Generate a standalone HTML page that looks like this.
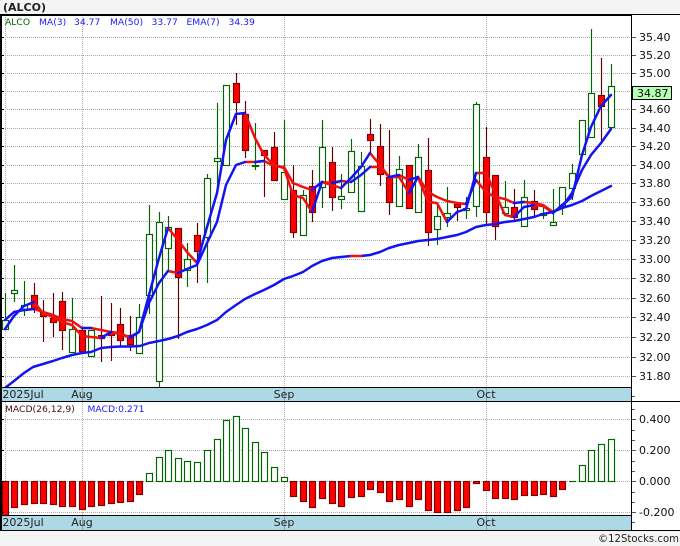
<!DOCTYPE html>
<html><head><meta charset="utf-8"><style>
html,body{margin:0;padding:0;background:#f4f4f4;width:680px;height:546px;overflow:hidden}
svg{display:block}
text{font-family:"DejaVu Sans",sans-serif}
.a{font-size:11px;fill:#111}
.l{font-size:9.2px}
.x{font-size:11px;fill:#222;text-anchor:middle}
</style></head><body>
<svg width="680" height="546" viewBox="0 0 680 546" xmlns="http://www.w3.org/2000/svg">
<rect width="680" height="546" fill="#f4f4f4"/>
<rect x="0" y="14" width="680" height="516" fill="#fff"/>
<rect x="1" y="388" width="630" height="13" fill="#add8e6"/>
<rect x="1" y="516" width="630" height="14" fill="#add8e6"/>
<text x="3" y="11" font-size="11" font-weight="bold" fill="#222">(ALCO)</text>
<!-- grid -->
<path fill="none" stroke="#aaa" stroke-dasharray="1 1" d="M5 37.5H631M5 55.5H631M5 73.5H631M5 91.5H631M5 109.5H631M5 128.5H631M5 146.5H631M5 165.5H631M5 183.5H631M5 202.5H631M5 221.5H631M5 240.5H631M5 259.5H631M5 278.5H631M5 298.5H631M5 317.5H631M5 337.5H631M5 357.5H631M5 376.5H631M5 419.5H631M5 450.5H631M5 481.5H631M5 512.5H631M5.5 15V387M82.5 15V387M284.5 15V387M486.5 15V387M5.5 402V515M82.5 402V515M284.5 402V515M486.5 402V515"/>
<path fill="none" stroke="#999" d="M82.5 388V401M284.5 388V401M486.5 388V401M82.5 516V530M284.5 516V530M486.5 516V530"/>
<!-- wicks -->
<path fill="none" stroke="#006400" stroke-width="1.15" d="M5.5 293V329M14.5 265V302M24.5 281V316M72.5 298V352M139.5 304V353M149.5 205V314M159.5 212V387M168.5 216V270M187.5 243V287M207.5 174V283M217.5 103V190M255.5 123V170M284.5 120V199M303.5 190V235M322.5 120V208M341.5 174V209M351.5 139V192M361.5 152V211M399.5 156V206M418.5 144V212M437.5 205V245M447.5 187V227M466.5 197V219M476.5 102V217M505.5 181V215M524.5 180V226M543.5 205V219M553.5 189V225M562.5 187V215M572.5 164V200M591.5 29V137M611.5 64V127"/>
<path fill="none" stroke="#600000" stroke-width="1.15" d="M34.5 283V313M43.5 300V342M53.5 293V337M62.5 292V350M82.5 327V354M101.5 296V362M111.5 303V361M120.5 308V347M130.5 316V351M178.5 228V339M197.5 223V283M236.5 73V125M245.5 101V158M264.5 150V197M274.5 132V180M293.5 165V238M312.5 170V222M332.5 147V211M370.5 119V153M380.5 124V186M389.5 130V215M409.5 165V208M428.5 138V246M457.5 204V221M486.5 127V225M495.5 175V240M514.5 189V220M534.5 190V217M601.5 58V142"/>
<!-- green bodies -->
<g fill="#fff" stroke="#006400" stroke-width="1.15">
<rect x="2.5" y="320.5" width="6" height="9"/><rect x="11.5" y="290.5" width="6" height="3"/><rect x="21.5" y="305.5" width="6" height="5"/><rect x="69.5" y="329.5" width="6" height="23"/><rect x="88.5" y="330.5" width="6" height="26"/><rect x="136.5" y="317.5" width="6" height="36"/><rect x="146.5" y="234.5" width="6" height="61"/><rect x="156.5" y="222.5" width="6" height="159"/><rect x="165.5" y="227.5" width="6" height="21"/><rect x="184.5" y="259.5" width="6" height="11"/><rect x="204.5" y="178.5" width="6" height="59"/><rect x="214.5" y="158.5" width="6" height="3"/><rect x="223.5" y="85.5" width="6" height="80"/><rect x="281.5" y="172.5" width="6" height="27"/><rect x="300.5" y="195.5" width="6" height="40"/><rect x="319.5" y="147.5" width="6" height="40"/><rect x="338.5" y="196.5" width="6" height="3"/><rect x="348.5" y="151.5" width="6" height="41"/><rect x="358.5" y="166.5" width="6" height="45"/><rect x="396.5" y="169.5" width="6" height="37"/><rect x="415.5" y="157.5" width="6" height="55"/><rect x="434.5" y="216.5" width="6" height="13"/><rect x="444.5" y="213.5" width="6" height="4"/><rect x="463.5" y="208.5" width="6" height="2"/><rect x="473.5" y="104.5" width="6" height="102"/><rect x="502.5" y="207.5" width="6" height="6"/><rect x="521.5" y="197.5" width="6" height="29"/><rect x="540.5" y="213.5" width="6" height="2"/><rect x="550.5" y="222.5" width="6" height="3"/><rect x="559.5" y="187.5" width="6" height="20"/><rect x="569.5" y="173.5" width="6" height="15"/><rect x="579.5" y="120.5" width="6" height="34"/><rect x="588.5" y="93.5" width="6" height="44"/><rect x="608.5" y="86.5" width="6" height="41"/>
<rect x="252.5" y="165.5" width="6" height="1" fill="#006400"/>
</g>
<!-- red bodies -->
<g fill="#f00" stroke="#800000" stroke-width="1.15">
<rect x="31.5" y="295.5" width="6" height="14"/><rect x="40.5" y="312.5" width="6" height="4"/><rect x="50.5" y="318.5" width="6" height="4"/><rect x="59.5" y="301.5" width="6" height="29"/><rect x="79.5" y="330.5" width="6" height="21"/><rect x="98.5" y="335.5" width="6" height="3"/><rect x="108.5" y="332.5" width="6" height="3"/><rect x="117.5" y="324.5" width="6" height="16"/><rect x="127.5" y="335.5" width="6" height="9"/><rect x="175.5" y="228.5" width="6" height="49"/><rect x="194.5" y="235.5" width="6" height="16"/><rect x="233.5" y="83.5" width="6" height="19"/><rect x="242.5" y="114.5" width="6" height="36"/><rect x="261.5" y="150.5" width="6" height="5"/><rect x="271.5" y="147.5" width="6" height="33"/><rect x="290.5" y="190.5" width="6" height="42"/><rect x="309.5" y="186.5" width="6" height="26"/><rect x="329.5" y="162.5" width="6" height="35"/><rect x="367.5" y="134.5" width="6" height="6"/><rect x="377.5" y="146.5" width="6" height="28"/><rect x="386.5" y="177.5" width="6" height="25"/><rect x="406.5" y="165.5" width="6" height="43"/><rect x="425.5" y="170.5" width="6" height="62"/><rect x="454.5" y="204.5" width="6" height="3"/><rect x="483.5" y="157.5" width="6" height="55"/><rect x="492.5" y="175.5" width="6" height="51"/><rect x="511.5" y="207.5" width="6" height="10"/><rect x="531.5" y="201.5" width="6" height="8"/><rect x="598.5" y="95.5" width="6" height="11"/>
</g>
<!-- indicator lines -->
<clipPath id="c"><rect x="0" y="15" width="631" height="372"/></clipPath>
<g clip-path="url(#c)" fill="none" stroke-width="2.5" stroke-linejoin="round" stroke-linecap="round">
<path stroke="#f01010" d="M34 309L43 312 53 315 62 319 72 321 82 328M91 328L101 330 111 332 120 334 130 337M168 271L178 273M245 162L255 162 264 161 274 166 284 167 293 183 303 187 312 190M322 182L332 183M341 181L351 182M370 167L380 167 389 177M399 175L409 180M418 177L428 192 437 197 447 201 457 203 466 204M476 180L486 192 495 197 505 199 514 203M524 202L534 203 543 205 553 212"/>
<path stroke="#f01010" d="M34 302L43 313 53 317 62 322 72 325 82 336 91 337 101 338M111 332L120 333 130 338M168 228L178 240 187 252 197 263M245 113L255 138 264 155 274 165 284 168 293 195 303 198 312 212M322 182L332 185 341 188M370 153L380 165 389 177 399 177 409 193M418 177L428 202 437 203 447 222M476 173L486 173 495 193 505 215 514 217M534 205L543 206 553 213"/>
<path stroke="#1414f0" d="M5 320L14 312 24 310 34 309M82 328L91 328M130 337L139 332 149 303 159 283 168 271M178 273L187 269 197 265 207 243 217 222 226 185 236 165 245 162M255 162L264 161M312 190L322 182M332 183L341 181M351 182L361 175 370 167M389 177L399 175M409 180L418 177M466 204L476 180M514 203L524 202M553 212L562 207 572 193 582 170 591 155 601 143 611 129"/>
<path stroke="#1414f0" d="M5 329L14 316 24 306 34 302M101 338L111 332M130 338L139 332 149 295 159 258 168 228M197 263L207 227 217 193 226 140 236 114 245 113M312 212L322 182M341 188L351 178 361 167 370 153M409 193L418 177M447 222L457 212 466 209 476 173M514 217L524 207 534 205M553 213L562 205 572 197 582 155 591 127 601 106 611 95"/>
<path stroke="#1414f0" d="M5 388L14 381 24 373 33 367 43 364 53 361 62 358 72 355 82 353 91 352 101 348 111 347 120 346.500 130 346.500 140 346 149 343 159 341 168 339 178 336 187 332 197 329 207 325 217 320 226 312 236 305 245 299 255 294 264 290 274 285 284 279 293 276 303 272 312 266 322 261 332 258 341 257 351 256M361 256L370 255 380 252 389 248 399 245 409 243 418 241 428 240 437 239 447 237 457 235 466 232 476 227 486 225 495 224 505 222 514 221 524 219 534 217 543 214 553 212 562 208 572 205 582 201 591 196 601 191 611 186"/>
<path stroke="#f01010" d="M351 256L361 256"/>
</g>
<!-- MACD bars -->
<g fill="#f00" stroke="#800000" stroke-width="1.15">
<rect x="2.500" y="481.500" width="6" height="34"/><rect x="11.500" y="481.500" width="6" height="26"/><rect x="21.500" y="481.500" width="6" height="23"/><rect x="31.500" y="481.500" width="6" height="22"/><rect x="40.500" y="481.500" width="6" height="22"/><rect x="50.500" y="481.500" width="6" height="23"/><rect x="59.500" y="481.500" width="6" height="25"/><rect x="69.500" y="481.500" width="6" height="25"/><rect x="79.500" y="481.500" width="6" height="28"/><rect x="88.500" y="481.500" width="6" height="25"/><rect x="98.500" y="481.500" width="6" height="24"/><rect x="108.500" y="481.500" width="6" height="22"/><rect x="117.500" y="481.500" width="6" height="21"/><rect x="127.500" y="481.500" width="6" height="20"/><rect x="136.500" y="481.500" width="6" height="13"/>
<rect x="290.500" y="481.500" width="6" height="15"/><rect x="300.500" y="481.500" width="6" height="20"/><rect x="309.500" y="481.500" width="6" height="26"/><rect x="319.500" y="481.500" width="6" height="17"/><rect x="329.500" y="481.500" width="6" height="22"/><rect x="338.500" y="481.500" width="6" height="25"/><rect x="348.500" y="481.500" width="6" height="16"/><rect x="358.500" y="481.500" width="6" height="15"/><rect x="367.500" y="481.500" width="6" height="8"/><rect x="377.500" y="481.500" width="6" height="11"/><rect x="386.500" y="481.500" width="6" height="20"/><rect x="396.500" y="481.500" width="6" height="18"/><rect x="406.500" y="481.500" width="6" height="25"/><rect x="415.500" y="481.500" width="6" height="18"/><rect x="425.500" y="481.500" width="6" height="29"/><rect x="434.500" y="481.500" width="6" height="31"/><rect x="444.500" y="481.500" width="6" height="31"/><rect x="454.500" y="481.500" width="6" height="29"/><rect x="463.500" y="481.500" width="6" height="26"/><rect x="473.500" y="481.500" width="6" height="2"/><rect x="483.500" y="481.500" width="6" height="9"/><rect x="492.500" y="481.500" width="6" height="17"/><rect x="502.500" y="481.500" width="6" height="17"/><rect x="511.500" y="481.500" width="6" height="18"/><rect x="521.500" y="481.500" width="6" height="14"/><rect x="531.500" y="481.500" width="6" height="14"/><rect x="540.500" y="481.500" width="6" height="13"/><rect x="550.500" y="481.500" width="6" height="15"/><rect x="559.500" y="481.500" width="6" height="8"/>
</g>
<g fill="#fff" stroke="#006400" stroke-width="1.15">
<rect x="146.500" y="473.500" width="6" height="8"/><rect x="156.500" y="457.500" width="6" height="24"/><rect x="165.500" y="450.500" width="6" height="31"/><rect x="175.500" y="458.500" width="6" height="23"/><rect x="184.500" y="461.500" width="6" height="20"/><rect x="194.500" y="462.500" width="6" height="19"/><rect x="204.500" y="450.500" width="6" height="31"/><rect x="214.500" y="439.500" width="6" height="42"/><rect x="223.500" y="420.500" width="6" height="61"/><rect x="233.500" y="416.500" width="6" height="65"/><rect x="242.500" y="428.500" width="6" height="53"/><rect x="252.500" y="442.500" width="6" height="39"/><rect x="261.500" y="452.500" width="6" height="29"/><rect x="271.500" y="467.500" width="6" height="14"/><rect x="281.500" y="477.500" width="6" height="4"/>
<path d="M569 481.500H576"/>
<rect x="579.500" y="465.500" width="6" height="16"/><rect x="588.500" y="450.500" width="6" height="31"/><rect x="598.500" y="444.500" width="6" height="37"/><rect x="608.500" y="439.500" width="6" height="42"/>
</g>
<!-- frame -->
<path fill="none" stroke="#000" d="M0 14.500H680M0 15.500H631M0 387.500H631M0 401.500H680M0 515.500H631M0 530.500H680M631.500 14V530M0.500 14V530M1.500 14V530"/>
<path fill="none" stroke="#000" d="M2 37.500H4M2 55.500H4M2 73.500H4M2 91.500H4M2 109.500H4M2 128.500H4M2 146.500H4M2 165.500H4M2 183.500H4M2 202.500H4M2 221.500H4M2 240.500H4M2 259.500H4M2 278.500H4M2 298.500H4M2 317.500H4M2 337.500H4M2 357.500H4M2 376.500H4M2 419.500H4M2 450.500H4M2 481.500H4M2 512.500H4"/>
<path fill="none" stroke="#555" d="M632 37.500H636M632 55.500H636M632 73.500H636M632 91.500H636M632 109.500H636M632 128.500H636M632 146.500H636M632 165.500H636M632 183.500H636M632 202.500H636M632 221.500H636M632 240.500H636M632 259.500H636M632 278.500H636M632 298.500H636M632 317.500H636M632 337.500H636M632 357.500H636M632 376.500H636M632 396.500H635M632 409.500H635M632 419.500H636M632 430.500H635M632 440.500H635M632 450.500H636M632 461.500H635M632 471.500H635M632 481.500H636M632 492.500H635M632 502.500H635M632 512.500H636M632 522.500H635"/>
<!-- axis labels -->
<g class="a">
<text class="a" x="639" y="41">35.40</text><text class="a" x="639" y="59">35.20</text><text class="a" x="639" y="77">35.00</text><text class="a" x="639" y="113">34.60</text><text class="a" x="639" y="132">34.40</text><text class="a" x="639" y="150">34.20</text><text class="a" x="639" y="169">34.00</text><text class="a" x="639" y="187">33.80</text><text class="a" x="639" y="206">33.60</text><text class="a" x="639" y="225">33.40</text><text class="a" x="639" y="244">33.20</text><text class="a" x="639" y="263">33.00</text><text class="a" x="639" y="282">32.80</text><text class="a" x="639" y="302">32.60</text><text class="a" x="639" y="321">32.40</text><text class="a" x="639" y="341">32.20</text><text class="a" x="639" y="361">32.00</text><text class="a" x="639" y="380">31.80</text>
<text class="a" x="639" y="423">0.400</text><text class="a" x="639" y="454">0.200</text><text class="a" x="639" y="485">0.000</text><text class="a" x="639" y="516">-0.200</text>
</g>
<rect x="632.500" y="86.500" width="39" height="13" fill="#b4ffb4" stroke="#000"/>
<text class="a" x="637" y="97">34.87</text>
<text class="x" x="23" y="398">2025Jul</text><text class="x" x="82" y="398">Aug</text><text class="x" x="284" y="398">Sep</text><text class="x" x="486" y="398">Oct</text>
<text class="x" x="23" y="526">2025Jul</text><text class="x" x="82" y="526">Aug</text><text class="x" x="284" y="526">Sep</text><text class="x" x="486" y="526">Oct</text>
<!-- legends -->
<text class="l" x="5" y="25" fill="#006400">ALCO</text>
<g fill="#1a1aff">
<text class="l" x="39" y="25">MA(3)</text><text class="l" x="74" y="25">34.77</text><text class="l" x="110" y="25">MA(50)</text><text class="l" x="151.500" y="25">33.77</text><text class="l" x="186.500" y="25">EMA(7)</text><text class="l" x="228.500" y="25">34.39</text>
<text class="l" x="87.500" y="412">MACD:0.271</text>
</g>
<text class="l" x="5" y="412" fill="#401010">MACD(26,12,9)</text>
<text x="598" y="542" font-size="11" fill="#222" textLength="81" lengthAdjust="spacingAndGlyphs">©12Stocks.com</text>
</svg>
</body></html>
